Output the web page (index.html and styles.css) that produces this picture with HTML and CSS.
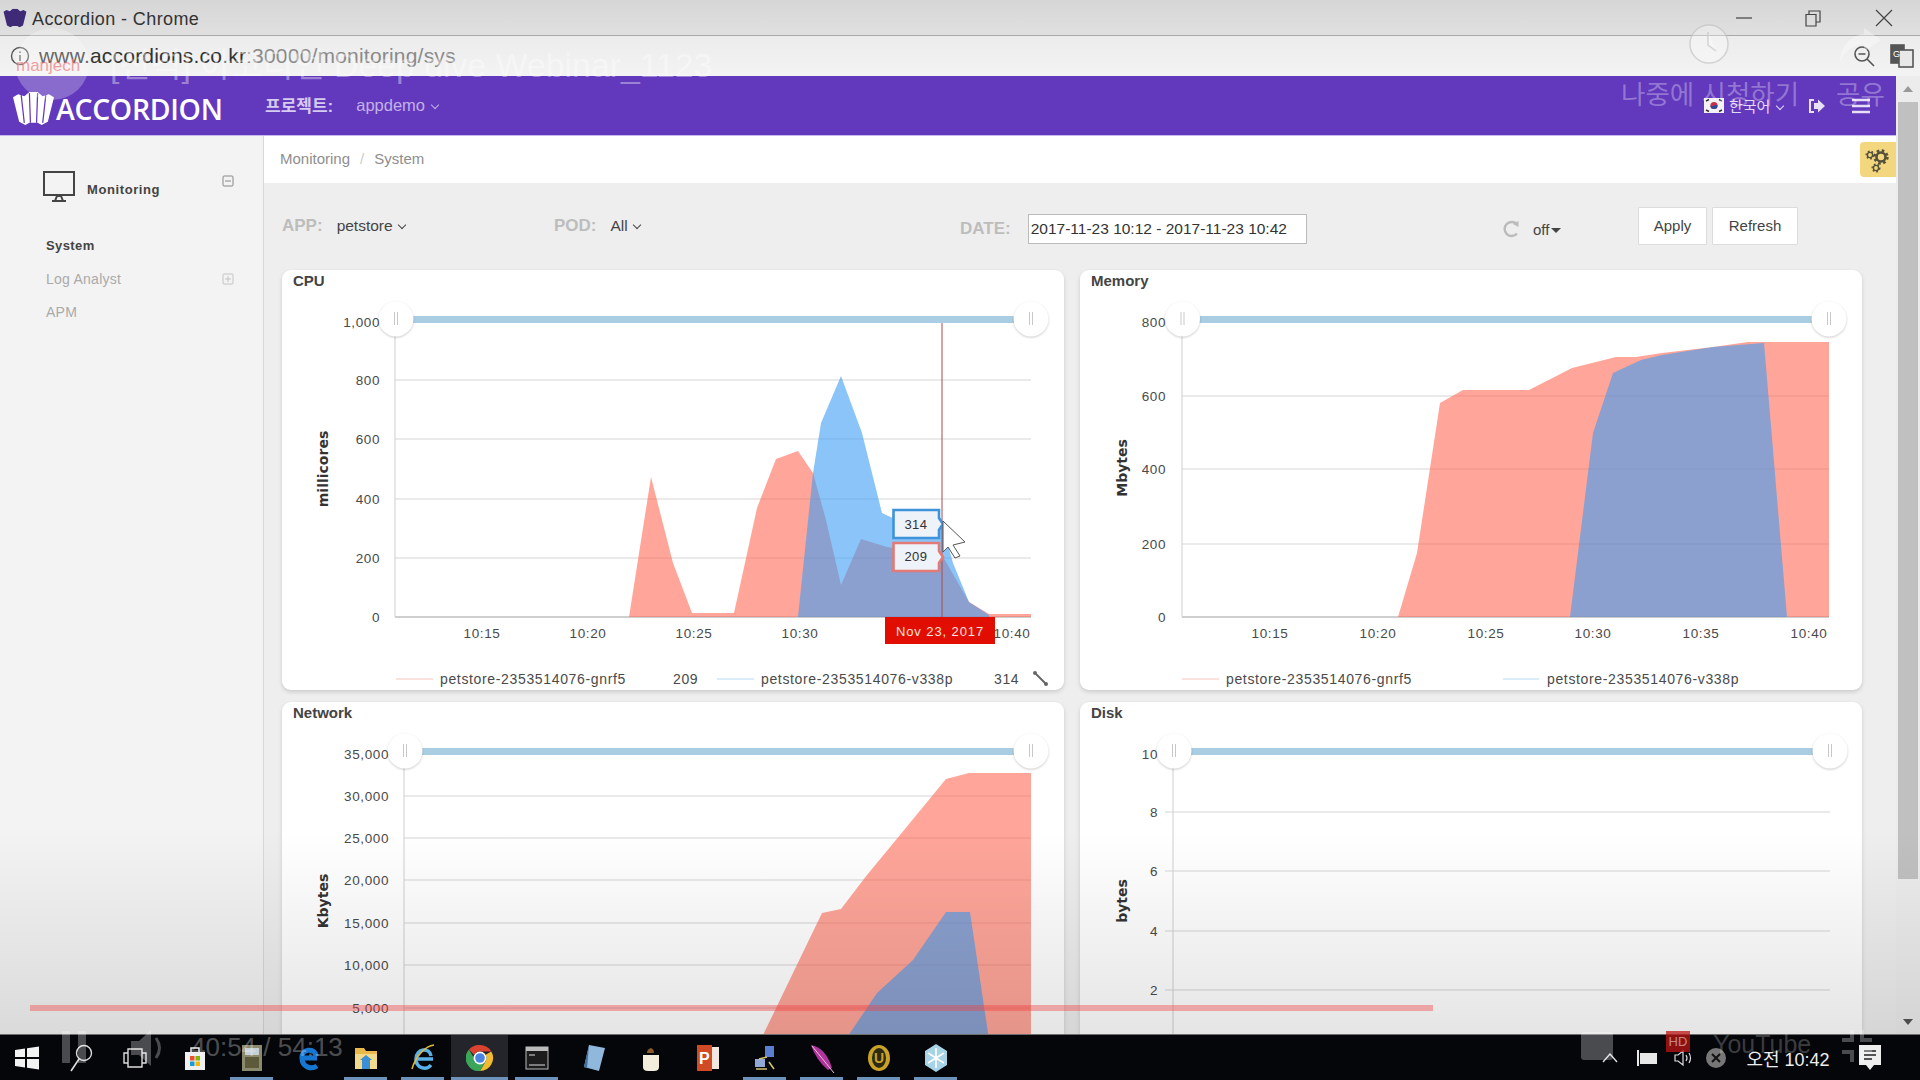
FILE: index.html
```html
<!DOCTYPE html>
<html lang="ko">

<head>
    <meta charset="UTF-8">
    <title>Accordion - Chrome</title>
    <link rel="stylesheet" href="styles.css">
</head>

<body>
    <svg class="svg-defs" width="0" height="0">
        <defs>
            <symbol id="accordion" viewBox="0 0 42 32">
                <path d="M1 5 L6 2 L12 4 L17 0 L25 0 L30 4 L36 2 L41 5 L35 29 L29 32 L25 30 L17 30 L13 32 L7 29 Z" />
            </symbol>
            <g id="handle">
                <circle class="handle-disc" r="17.5" />
                <path class="handle-grip" d="M-1.5 -7 V6 M1.5 -7 V6" />
            </g>
        </defs>
    </svg>

    <div class="titlebar">
        <svg class="favicon" viewBox="0 0 42 32"><use href="#accordion" /></svg>
        <span class="window-title">Accordion - Chrome</span>
        <div class="window-controls">
            <svg width="20" height="20" viewBox="0 0 20 20"><path d="M2 10 H18" /></svg>
            <svg width="20" height="20" viewBox="0 0 20 20"><path d="M3 6.5 H13 V18 H3 Z M6 6 V3 H17 V14 H13.5" /></svg>
            <svg width="20" height="20" viewBox="0 0 20 20"><path d="M2 2 L18 18 M18 2 L2 18" /></svg>
        </div>
    </div>

    <div class="addressbar">
        <svg class="info-icon" width="20" height="20" viewBox="0 0 20 20">
            <circle cx="10" cy="10" r="8.5" />
            <path d="M10 9 V15 M10 5.5 V7" />
        </svg>
        <span class="url"><b>www.accordions.co.kr</b>:30000/monitoring/sys</span>
        <div class="address-tools">
            <svg width="24" height="24" viewBox="0 0 24 24">
                <circle cx="10" cy="10" r="7" />
                <path d="M6.5 10 H13.5 M15 15 L22 22" />
            </svg>
            <svg class="translate-icon" width="24" height="24" viewBox="0 0 24 24">
                <rect x="1" y="1" width="13" height="18" fill="#555" />
                <rect x="9" y="6" width="14" height="17" fill="#e8e8e8" stroke="#555" />
                <text x="3" y="13" class="translate-g">G</text>
            </svg>
        </div>
    </div>

    <div class="app">
        <div class="app-content">
            <header class="topnav">
                <a class="brand">
                    <svg class="brand-mark" viewBox="0 0 42 32">
                        <use href="#accordion" />
                        <path d="M9 3 L12 30 M17 1 L18 30 M25 1 L24 30 M33 3 L30 30" />
                    </svg>
                    <span class="brand-name">ACCORDION</span>
                </a>
                <span class="project-label">프로젝트:</span>
                <span class="project-value">appdemo <i class="caret"></i></span>
                <div class="nav-right">
                    <svg class="flag" width="20" height="15" viewBox="0 0 20 15">
                        <rect width="20" height="15" fill="#f4f1f4" />
                        <circle cx="10" cy="7.5" r="3.6" fill="#c8304a" />
                        <path d="M6.4 7.5 A3.6 3.6 0 0 0 13.6 7.5 Q12 6.5 10 7.5 T6.4 7.5 Z" fill="#2a4a9a" />
                        <path d="M2 3 L5 1.5 M15 1.5 L18 3 M2 12 L5 13.5 M15 13.5 L18 12" stroke="#333" stroke-width="1.4" />
                    </svg>
                    <span class="lang">한국어 <i class="caret"></i></span>
                    <svg class="exit-icon" width="18" height="16" viewBox="0 0 18 16">
                        <path class="exit-door" d="M6 2 H2 V14 H6" />
                        <path class="exit-arrow" d="M6 5 H10 V1.5 L17 8 L10 14.5 V11 H6 Z" />
                    </svg>
                    <svg class="menu-icon" width="18" height="16" viewBox="0 0 18 16">
                        <path d="M0 2 H18 M0 8 H18 M0 14 H18" />
                    </svg>
                </div>
            </header>

            <div class="page">
                <aside class="sidebar">
                    <div class="side-group">
                        <svg class="monitor-icon" width="32" height="31" viewBox="0 0 32 31">
                            <path class="monitor-screen" d="M1 1 H31 V24 H1 Z" />
                            <path class="monitor-stand" d="M12 30 H20 L18 25 H14 Z M9 30 H23" />
                        </svg>
                        <span class="side-heading">Monitoring</span>
                        <svg class="tree-box" width="12" height="12" viewBox="0 0 12 12">
                            <rect x="1" y="1" width="10" height="10" rx="1" />
                            <path d="M3 6 H9" />
                        </svg>
                    </div>
                    <ul class="side-menu">
                        <li class="active">System</li>
                        <li>Log Analyst
                            <svg class="tree-box light" width="12" height="12" viewBox="0 0 12 12">
                                <rect x="1" y="1" width="10" height="10" rx="1" />
                                <path d="M3 6 H9 M6 3 V9" />
                            </svg>
                        </li>
                        <li>APM</li>
                    </ul>
                </aside>

                <main class="content">
                    <div class="breadcrumb">
                        <span>Monitoring</span>
                        <span class="sep">/</span>
                        <span>System</span>
                        <div class="settings-tab">
                            <svg width="26" height="28" viewBox="0 0 26 28">
                                <circle class="gear-hub" cx="16" cy="11" r="4.5" />
                                <circle class="gear-teeth" cx="16" cy="11" r="6.5" />
                                <circle class="gear-hub small" cx="5" cy="9" r="2.6" />
                                <circle class="gear-teeth small" cx="5" cy="9" r="3.8" />
                                <circle class="gear-hub small" cx="11" cy="22" r="2.6" />
                                <circle class="gear-teeth small" cx="11" cy="22" r="3.8" />
                            </svg>
                        </div>
                    </div>

                    <form class="filters">
                        <div class="filter filter-app">
                            <label>APP:</label>
                            <span class="filter-value">petstore <i class="caret"></i></span>
                        </div>
                        <div class="filter filter-pod">
                            <label>POD:</label>
                            <span class="filter-value">All <i class="caret"></i></span>
                        </div>
                        <div class="filter filter-date">
                            <label>DATE:</label>
                            <input class="date-input" type="text" value="2017-11-23 10:12 - 2017-11-23 10:42">
                        </div>
                        <div class="filter filter-auto">
                            <svg class="reload-icon" width="18" height="18" viewBox="0 0 18 18">
                                <path d="M15 4.5 A7 7 0 1 0 15 13.5" />
                                <path class="reload-tip" d="M11 4 L16.5 1 V7 Z" />
                            </svg>
                            <span class="auto-value">off<i class="caret-solid"></i></span>
                        </div>
                        <button class="btn" type="button">Apply</button>
                        <button class="btn btn-wide" type="button">Refresh</button>
                    </form>

                    <div class="panels">
                        <section class="panel">
                            <h3 class="panel-title">CPU</h3>
                            <svg class="chart" viewBox="282 290 782 400">
                                <path class="grid" d="M395 380 H1031 M395 439 H1031 M395 499 H1031 M395 558 H1031" />
                                <path class="axis" d="M395 321 V617" />
                                <path class="axis-zero" d="M395 617 H1031" />
                                <path class="area-red" d="M629 617 L651 477 L673 563 L692 613 L734 613 L757 508 L776 459 L798 451 L813 473 L826 520 L841 585 L861 539 L887 547 L942 555 L969 602 L989 614 L1031 614 V617 Z" />
                                <path class="area-blue" d="M798 617 L813 473 L821 423 L841 376 L862 433 L882 513 L897 520 L942 524 L953 563 L969 602 L989 615 V617 Z" />
                                <path class="crosshair" d="M942 321 V617" />
                                <rect class="slider-bar" x="410" y="316" width="606" height="7" />
                                <use href="#handle" x="396" y="319" />
                                <use href="#handle" x="1031" y="319" />
                                <text class="tick" x="380" y="327">1,000</text>
                                <text class="tick" x="380" y="385">800</text>
                                <text class="tick" x="380" y="444">600</text>
                                <text class="tick" x="380" y="504">400</text>
                                <text class="tick" x="380" y="563">200</text>
                                <text class="tick" x="380" y="622">0</text>
                                <text class="axis-title" transform="translate(328 469) rotate(-90)">millicores</text>
                                <text class="tick mid" x="482" y="638">10:15</text>
                                <text class="tick mid" x="588" y="638">10:20</text>
                                <text class="tick mid" x="694" y="638">10:25</text>
                                <text class="tick mid" x="800" y="638">10:30</text>
                                <text class="tick mid" x="1012" y="638">10:40</text>
                                <path class="tip tip-blue" d="M893.5 510 H939 V518 L943 524 L939 530 V538 H893.5 Z" />
                                <path class="tip tip-red" d="M893.5 543 H939 V551 L943 557 L939 563 V571 H893.5 Z" />
                                <text class="tip-text" x="916" y="529">314</text>
                                <text class="tip-text" x="916" y="561">209</text>
                                <rect class="date-flag" x="885" y="617" width="110" height="27" />
                                <text class="date-flag-text" x="940" y="636">Nov 23, 2017</text>
                                <path class="cursor" d="M943 521 L965 542 L953 545 L960 556 L955 558 L948 547 L943 552 Z" />
                                <path class="legend-line red" d="M396 679 H433" />
                                <text class="legend" x="440" y="684">petstore-2353514076-gnrf5</text>
                                <text class="legend" x="673" y="684">209</text>
                                <path class="legend-line blue" d="M717 679 H754" />
                                <text class="legend" x="761" y="684">petstore-2353514076-v338p</text>
                                <text class="legend" x="994" y="684">314</text>
                                <path class="wrench" d="M1036 674 L1046 684" />
                                <circle class="wrench-head" cx="1035" cy="673" r="2" />
                                <circle class="wrench-head" cx="1046" cy="684" r="2" />
                            </svg>
                        </section>

                        <section class="panel">
                            <h3 class="panel-title">Memory</h3>
                            <svg class="chart" viewBox="1080 290 782 400">
                                <path class="grid" d="M1182 396 H1829 M1182 469 H1829 M1182 544 H1829" />
                                <path class="axis" d="M1182 323 V617" />
                                <path class="axis-zero" d="M1182 617 H1829" />
                                <path class="area-red" d="M1398 617 L1417 553 L1440 403 L1463 390 L1529 390 L1572 368 L1616 357 L1636 357 L1662 353 L1713 347 L1748 342 L1829 342 V617 Z" />
                                <path class="area-blue" d="M1570 617 L1593 433 L1613 373 L1641 360 L1662 355 L1713 347 L1764 343 L1787 617 Z" />
                                <rect class="slider-bar" x="1196" y="316" width="620" height="7" />
                                <use href="#handle" x="1182.5" y="319" />
                                <use href="#handle" x="1829" y="319" />
                                <text class="tick" x="1166" y="327">800</text>
                                <text class="tick" x="1166" y="401">600</text>
                                <text class="tick" x="1166" y="474">400</text>
                                <text class="tick" x="1166" y="549">200</text>
                                <text class="tick" x="1166" y="622">0</text>
                                <text class="axis-title" transform="translate(1127 468) rotate(-90)">Mbytes</text>
                                <text class="tick mid" x="1270" y="638">10:15</text>
                                <text class="tick mid" x="1378" y="638">10:20</text>
                                <text class="tick mid" x="1486" y="638">10:25</text>
                                <text class="tick mid" x="1593" y="638">10:30</text>
                                <text class="tick mid" x="1701" y="638">10:35</text>
                                <text class="tick mid" x="1809" y="638">10:40</text>
                                <path class="legend-line red" d="M1182 679 H1219" />
                                <text class="legend" x="1226" y="684">petstore-2353514076-gnrf5</text>
                                <path class="legend-line blue" d="M1503 679 H1539" />
                                <text class="legend" x="1547" y="684">petstore-2353514076-v338p</text>
                            </svg>
                        </section>

                        <section class="panel">
                            <h3 class="panel-title">Network</h3>
                            <svg class="chart" viewBox="282 722 782 400">
                                <path class="grid" d="M404 796 H1031 M404 838 H1031 M404 880 H1031 M404 923 H1031 M404 965 H1031 M404 1008 H1031" />
                                <path class="axis" d="M404 756 V1100" />
                                <path class="area-red" d="M754 1050 L764 1033 L822 913 L841 909 L867 875 L900 835 L946 779 L969 773 L1031 773 V1050 Z" />
                                <path class="area-blue" d="M840 1050 L850 1033 L877 993 L913 960 L946 912 L970 912 L988 1033 L991 1050 Z" />
                                <rect class="slider-bar" x="420" y="748" width="596" height="7" />
                                <use href="#handle" x="405" y="751" />
                                <use href="#handle" x="1031" y="751" />
                                <text class="tick" x="389" y="759">35,000</text>
                                <text class="tick" x="389" y="801">30,000</text>
                                <text class="tick" x="389" y="843">25,000</text>
                                <text class="tick" x="389" y="885">20,000</text>
                                <text class="tick" x="389" y="928">15,000</text>
                                <text class="tick" x="389" y="970">10,000</text>
                                <text class="tick" x="389" y="1013">5,000</text>
                                <text class="axis-title" transform="translate(328 901) rotate(-90)">Kbytes</text>
                            </svg>
                        </section>

                        <section class="panel">
                            <h3 class="panel-title">Disk</h3>
                            <svg class="chart" viewBox="1080 722 782 400">
                                <path class="grid" d="M1165 812 H1830 M1165 871 H1830 M1165 931 H1830 M1165 990 H1830" />
                                <path class="axis" d="M1173 756 V1100" />
                                <rect class="slider-bar" x="1190" y="748" width="625" height="7" />
                                <use href="#handle" x="1174" y="751" />
                                <use href="#handle" x="1830" y="751" />
                                <text class="tick" x="1158" y="759">10</text>
                                <text class="tick" x="1158" y="817">8</text>
                                <text class="tick" x="1158" y="876">6</text>
                                <text class="tick" x="1158" y="936">4</text>
                                <text class="tick" x="1158" y="995">2</text>
                                <text class="axis-title" transform="translate(1127 901) rotate(-90)">bytes</text>
                            </svg>
                        </section>
                    </div>
                </main>
            </div>
        </div>

        <div class="scrollbar">
            <i class="arrow-up"></i>
            <div class="scroll-thumb"></div>
            <i class="arrow-down"></i>
        </div>
    </div>

    <footer class="taskbar">
        <div class="task-tile narrow">
            <svg width="24" height="24" viewBox="0 0 24 24"><path fill="#f2f2f2" d="M0 4 L10 2.5 V11 H0 Z M12 2.2 L24 0.5 V11 H12 Z M0 13 H10 V21.5 L0 20 Z M12 13 H24 V23.5 L12 21.8 Z" /></svg>
        </div>
        <div class="task-tile narrow">
            <svg width="24" height="28" viewBox="0 0 24 28"><circle cx="15" cy="9" r="7.5" fill="none" stroke="#ddd" stroke-width="1.4" /><path d="M10 15 L2 27" stroke="#ddd" stroke-width="1.6" /></svg>
        </div>
        <div class="task-tile narrow spaced">
            <svg width="26" height="26" viewBox="0 0 26 26"><path d="M6 4 H20 V22 H6 Z M6 8 H2 V18 H6 M20 8 H24 V18 H20" fill="none" stroke="#ddd" stroke-width="1.4" /></svg>
        </div>
        <div class="task-tile">
            <svg width="26" height="28" viewBox="0 0 26 28"><path fill="#f0f0f0" d="M3 8 H23 V26 H3 Z" /><path d="M9 8 V4 H17 V8" fill="none" stroke="#f0f0f0" stroke-width="1.5" /><rect x="8" y="12" width="4.5" height="4.5" fill="#e8512a" /><rect x="13.5" y="12" width="4.5" height="4.5" fill="#7fba00" /><rect x="8" y="17.5" width="4.5" height="4.5" fill="#1b9ad6" /><rect x="13.5" y="17.5" width="4.5" height="4.5" fill="#f5b800" /></svg>
        </div>
        <div class="task-tile running">
            <svg width="24" height="30" viewBox="0 0 24 30"><rect x="2" y="2" width="20" height="26" fill="#8c8a6e" /><rect x="5" y="14" width="14" height="11" fill="#5c5a3a" /><rect x="5" y="5" width="14" height="7" fill="#c5cfd6" /></svg>
        </div>
        <div class="task-tile">
            <svg width="24" height="28" viewBox="0 0 24 28"><path fill="none" stroke="#1677d2" stroke-width="5" d="M20 14 H5 C4 5 18 3 19 12 M5 14 C5 23 14 26 20 22" /></svg>
        </div>
        <div class="task-tile running">
            <svg width="26" height="26" viewBox="0 0 26 26"><path fill="#e9b94a" d="M2 3 H11 L13 6 H24 V24 H2 Z" /><path fill="#f3d98a" d="M2 9 H24 V24 H2 Z" /><rect x="9" y="15" width="8" height="9" fill="#3b8fd6" /><path fill="#3b8fd6" d="M7 15 L13 10 L19 15 Z" /></svg>
        </div>
        <div class="task-tile running">
            <svg width="26" height="30" viewBox="0 0 26 30"><path fill="none" stroke="#58b2e8" stroke-width="3.5" d="M23 16 H6 C6 5 20 4 21 13 M6 16 C6 25 16 28 21 22" /><path fill="none" stroke="#e2b93d" stroke-width="1.5" d="M2 26 C6 12 16 3 24 2" /></svg>
        </div>
        <div class="task-tile running active">
            <svg width="28" height="28" viewBox="0 0 28 28">
                <path fill="#d9432f" d="M14 1 A13 13 0 0 1 25.3 7.5 H14 A6.5 6.5 0 0 0 8 11 L3 5.5 A13 13 0 0 1 14 1 Z" />
                <path fill="#f2bb2f" d="M25.3 7.5 A13 13 0 0 1 14 27 L19.6 17.2 A6.5 6.5 0 0 0 19.6 10.8 Z" />
                <path fill="#3ba55a" d="M3 5.5 A13 13 0 0 0 14 27 L19.6 17.2 A6.5 6.5 0 0 1 8 14 Z" />
                <circle cx="14" cy="14" r="6.5" fill="#fff" />
                <circle cx="14" cy="14" r="4.8" fill="#4a84e0" />
            </svg>
        </div>
        <div class="task-tile running">
            <svg width="24" height="26" viewBox="0 0 24 26"><rect x="1" y="2" width="22" height="22" fill="#1c1c1c" stroke="#bbb" /><rect x="1" y="2" width="22" height="4" fill="#bbb" /><path d="M4 10 H10 M4 20 H20" stroke="#ddd" /></svg>
        </div>
        <div class="task-tile">
            <svg width="24" height="30" viewBox="0 0 24 30"><path fill="#8fb8dc" d="M7 2 L23 5 L17 28 L2 24 Z" /><path fill="#3f6f9a" d="M7 2 L2 24 L5 25 Z" /></svg>
        </div>
        <div class="task-tile">
            <svg width="24" height="30" viewBox="0 0 24 30"><path fill="#f3eddb" d="M4 12 H20 V24 Q20 28 15 28 H9 Q4 28 4 24 Z" /><path fill="#8a5a2a" d="M8 10 Q8 6 12 5 Q15 6 15 10 Z" /></svg>
        </div>
        <div class="task-tile">
            <svg width="26" height="28" viewBox="0 0 26 28"><rect x="12" y="3" width="12" height="22" fill="#f2e6e0" /><rect x="2" y="1" width="15" height="26" fill="#d04a26" /><text class="ppt-letter" x="4" y="20">P</text></svg>
        </div>
        <div class="task-tile running">
            <svg width="24" height="28" viewBox="0 0 24 28"><rect x="12" y="2" width="9" height="11" fill="#5a7fd0" /><rect x="2" y="15" width="10" height="8" fill="#8fa8d8" /><path d="M14 13 L6 15 M3 25 H14 M16 18 L21 25" stroke="#d6c26e" stroke-width="1.6" /></svg>
        </div>
        <div class="task-tile running">
            <svg width="28" height="32" viewBox="0 0 28 32"><path fill="#b2339c" d="M3 3 Q18 6 24 26 L20 28 Q8 18 3 3 Z" /><path d="M4 4 L26 31" stroke="#e6c3df" /></svg>
        </div>
        <div class="task-tile running">
            <svg width="24" height="28" viewBox="0 0 24 28"><ellipse cx="12" cy="14" rx="11" ry="13" fill="#c9a227" /><ellipse cx="12" cy="14" rx="7" ry="10" fill="#2d2a12" /><text class="ue-letter" x="7" y="19">U</text></svg>
        </div>
        <div class="task-tile running">
            <svg width="24" height="30" viewBox="0 0 24 30"><path fill="#a7d3e6" d="M12 1 L23 8 V22 L12 29 L1 22 V8 Z" /><path d="M12 5 V25 M4 10 L20 20 M20 10 L4 20" stroke="#fff" stroke-width="1.6" /></svg>
        </div>

        <div class="tray">
            <div class="tray-item chevron"><svg width="16" height="10" viewBox="0 0 16 10"><path d="M1 9 L8 1 L15 9" /></svg></div>
            <div class="tray-item battery"><svg width="22" height="18" viewBox="0 0 22 18"><rect x="3" y="4" width="17" height="11" fill="#e8e8e8" /><path d="M1 1 V17" stroke="#e8e8e8" stroke-width="2" /></svg></div>
            <div class="tray-item speaker"><svg width="20" height="18" viewBox="0 0 20 18"><path d="M1 6 H4 L9 2 V16 L4 12 H1 Z M12 6 Q14 9 12 12 M15 4 Q18 9 15 14" /></svg></div>
            <div class="tray-item network"><svg width="22" height="22" viewBox="0 0 22 22"><circle cx="11" cy="11" r="10" fill="#777" /><path d="M7 7 L15 15 M15 7 L7 15" stroke="#111" stroke-width="2" /></svg></div>
            <div class="tray-item clock">오전 10:42</div>
            <div class="tray-item notify"><svg width="24" height="28" viewBox="0 0 24 28"><path fill="#eee" d="M1 1 H23 V21 H16 L12 26 L8 21 H1 Z" /><path d="M6 7 H18 M6 11 H18 M6 15 H14" stroke="#222" stroke-width="1.5" /></svg></div>
        </div>
    </footer>

    <!-- video player chrome that sits on top of the recording -->
    <div class="player">
        <div class="player-fade"></div>
        <div class="channel-badge"></div>
        <span class="channel-name">manjech</span>
        <div class="video-title">[전격] 아코디언 Deep dive Webinar_1123</div>
        <svg class="later-icon" width="42" height="42" viewBox="0 0 42 42"><circle cx="21" cy="21" r="19" /><path d="M20 9 V22 L28 28" /></svg>
        <svg class="share-icon" width="44" height="36" viewBox="0 0 44 36"><path d="M26 1 L43 13 L26 25 V18 C14 18 7 24 2 35 C3 20 12 8 26 7 Z" /></svg>
        <span class="later-text">나중에 시청하기</span>
        <span class="share-text">공유</span>
        <div class="progress"></div>
        <svg class="pause-icon" width="26" height="32" viewBox="0 0 26 32"><rect x="0" width="8" height="32" /><rect x="16" width="8" height="32" /></svg>
        <svg class="volume-icon" width="36" height="40" viewBox="0 0 36 40"><path d="M0 13 H8 L20 2 V38 L8 27 H0 Z" /><path class="wave" d="M25 10 Q32 20 25 30" /></svg>
        <span class="time-text">40:54 / 54:13</span>
        <svg class="cc-icon" width="32" height="28" viewBox="0 0 32 28"><rect width="32" height="28" rx="3" /></svg>
        <span class="hd-badge">HD</span>
        <span class="yt-text">YouTube</span>
        <svg class="full-icon" width="30" height="32" viewBox="0 0 30 32"><path d="M10 0 V10 H0 M20 0 V10 H30 M10 32 V22 H0 M20 32 V22 H30" /></svg>
    </div>
</body>

</html>
```

FILE: styles.css
```css
* {
    box-sizing: border-box;
}

html,
body {
    margin: 0;
    padding: 0;
}

body {
    position: relative;
    display: flex;
    flex-direction: column;
    width: 1920px;
    height: 1080px;
    overflow: hidden;
    font-family: "Liberation Sans", "Noto Sans CJK KR", sans-serif;
    color: #444;
    background: #eee;
}

.svg-defs {
    position: absolute;
}

/* browser window */
.titlebar {
    display: flex;
    align-items: center;
    flex: 0 0 36px;
    padding: 3px 0 0 3px;
    background: linear-gradient(#d6d6d6, #e0e0e0);
    border-bottom: 1px solid #a9a9a9;
}

.favicon {
    width: 24px;
    height: 20px;
    margin-top: -3px;
    fill: #3f2a78;
}

.window-title {
    margin-left: 5px;
    font-size: 18px;
    letter-spacing: .4px;
    color: #333;
}

.window-controls {
    display: flex;
    gap: 49px;
    margin: -3px 0 0 auto;
    padding-right: 26px;
}

.window-controls svg {
    fill: none;
    stroke: #444;
    stroke-width: 1.2;
}

.window-controls svg:last-child {
    margin-left: 2px;
}

.addressbar {
    display: flex;
    align-items: center;
    flex: 0 0 40px;
    padding: 0 6px 0 10px;
    background: linear-gradient(#ececec, #f3f3f3);
}

.info-icon {
    fill: none;
    stroke: #555;
    stroke-width: 1.4;
}

.url {
    margin-left: 9px;
    font-size: 21px;
    letter-spacing: .2px;
    color: #8a8a8a;
}

.url b {
    font-weight: normal;
    color: #333;
}

.address-tools {
    display: flex;
    gap: 14px;
    margin-left: auto;
}

.address-tools svg {
    fill: none;
    stroke: #555;
    stroke-width: 1.6;
}

.translate-g {
    font-size: 9px;
    fill: #fff;
    stroke: none;
}

.app {
    display: flex;
    flex: 1;
    min-height: 0;
}

.app-content {
    display: flex;
    flex-direction: column;
    width: 1896px;
}

/* top navigation */
.topnav {
    display: flex;
    align-items: center;
    flex: 0 0 60px;
    padding-left: 12px;
    color: #fff;
    background: #6238bd;
    border-bottom: 1px solid #c9b6ee;
}

.brand {
    display: flex;
    align-items: center;
    margin-top: 6px;
    width: 253px;
}

.brand-mark {
    width: 43px;
    height: 33px;
    fill: #fff;
}

.brand-mark path {
    fill: none;
    stroke: #6238bd;
    stroke-width: 1.2;
}

.brand-name {
    margin-left: 1px;
    font-family: "Open Sans", sans-serif;
    font-size: 28.4px;
    font-weight: 600;
    letter-spacing: -.3px;
}

.project-label {
    margin-top: -2px;
    font-size: 17px;
    font-weight: bold;
    color: #d6cbf0;
}

.project-value {
    margin-left: 23px;
    font-size: 16.5px;
    color: #c2b2ea;
}

.caret {
    display: inline-block;
    width: 6px;
    height: 6px;
    margin: 0 0 3px 2px;
    border-right: 1px solid currentColor;
    border-bottom: 1px solid currentColor;
    transform: rotate(45deg);
}

.caret-solid {
    display: inline-block;
    margin-left: 2px;
    vertical-align: middle;
    border-top: 5px solid #444;
    border-right: 5px solid transparent;
    border-left: 5px solid transparent;
}

.nav-right {
    display: flex;
    align-items: center;
    margin-left: auto;
    padding-right: 26px;
}

.lang {
    width: 77px;
    margin-left: 5px;
    font-size: 15px;
    color: #e2daf5;
}

.exit-icon {
    margin-left: 2px;
}

.exit-door {
    fill: none;
    stroke: #e6dff5;
    stroke-width: 2;
}

.exit-arrow {
    fill: #e6dff5;
}

.menu-icon {
    margin-left: 26px;
    fill: none;
    stroke: #e6dff5;
    stroke-width: 2.6;
}

/* sidebar */
.page {
    display: flex;
    flex: 1;
    min-height: 0;
    overflow: hidden;
}

.sidebar {
    flex: 0 0 264px;
    padding: 35px 29px 0 43px;
    background: #f3f3f3;
    border-right: 1px solid #d8d8d8;
}

.side-group {
    display: flex;
    align-items: flex-start;
}

.monitor-screen,
.monitor-stand {
    fill: none;
    stroke: #444;
    stroke-width: 2;
}

.side-heading {
    margin: 11px 0 0 12px;
    font-size: 13px;
    font-weight: bold;
    letter-spacing: .6px;
    color: #444;
}

.tree-box {
    margin: 4px 0 0 auto;
    fill: none;
    stroke: #888;
}

.tree-box.light {
    margin: 0;
    stroke: #c4c4c4;
}

.side-menu {
    margin: 27px 0 0 3px;
    padding: 0;
    list-style: none;
    font-size: 14px;
    color: #aaa;
}

.side-menu li {
    display: flex;
    align-items: center;
    justify-content: space-between;
    height: 33px;
    letter-spacing: .25px;
}

.side-menu .active {
    font-size: 13px;
    font-weight: bold;
    letter-spacing: .4px;
    color: #444;
}

/* main column */
.content {
    flex: 1;
    min-width: 0;
    padding: 0 0 0 18px;
}

.breadcrumb {
    display: flex;
    align-items: center;
    gap: 10px;
    height: 47px;
    margin-left: -18px;
    padding: 0 0 2px 16px;
    font-size: 15px;
    color: #8e8e8e;
    background: #fff;
}

.sep {
    color: #ccc;
}

.settings-tab {
    display: flex;
    align-items: center;
    justify-content: center;
    width: 36px;
    height: 35px;
    margin: 2px 0 0 auto;
    background: #f3d77e;
    border-radius: 4px 0 0 4px;
}

.gear-hub {
    fill: none;
    stroke: #55503a;
    stroke-width: 2.6;
}

.gear-hub.small {
    stroke-width: 1.4;
}

.gear-teeth {
    fill: none;
    stroke: #55503a;
    stroke-width: 2.4;
    stroke-dasharray: 2.6 2.5;
}

.gear-teeth.small {
    stroke-width: 1.4;
    stroke-dasharray: 1.8 2;
}

.filters {
    display: flex;
    align-items: center;
    height: 87px;
    padding-bottom: 2px;
}

.filter {
    display: flex;
    align-items: center;
}

.filter label {
    font-size: 17px;
    font-weight: bold;
    color: #bdbdbd;
}

.filter-value {
    margin-left: 14px;
    font-size: 15.5px;
    color: #444;
}

.filter-app {
    width: 272px;
}

.filter-pod {
    width: 406px;
}

.filter-date {
    width: 542px;
    margin-top: 7px;
}

.date-input {
    width: 279px;
    height: 30px;
    margin-left: 17px;
    padding: 0 2px;
    font-family: inherit;
    font-size: 15.5px;
    color: #333;
    background: #fff;
    border: 1px solid #bbb;
    border-radius: 0;
}

.filter-auto {
    gap: 13px;
    width: 136px;
    margin-top: 7px;
}

.reload-icon {
    fill: none;
    stroke: #bbb;
    stroke-width: 2.4;
}

.reload-tip {
    fill: #bbb;
    stroke: none;
}

.auto-value {
    font-size: 15px;
}

.btn {
    width: 69px;
    height: 38px;
    margin-right: 5px;
    font-family: inherit;
    font-size: 15px;
    color: #444;
    background: #fff;
    border: 1px solid #dcdcdc;
    border-radius: 1px;
}

.btn-wide {
    width: 86px;
}

/* chart panels */
.panels {
    display: grid;
    grid-template-columns: 782px 782px;
    grid-auto-rows: 420px;
    column-gap: 16px;
    row-gap: 12px;
}

.panel {
    background: #fff;
    border-radius: 9px;
    box-shadow: 0 2px 4px rgba(0, 0, 0, .15);
    overflow: hidden;
}

.panel-title {
    height: 20px;
    margin: 0;
    padding: 2px 0 0 11px;
    font-size: 15px;
    font-weight: bold;
    color: #444;
}

.chart {
    display: block;
    width: 782px;
    height: 400px;
}

.grid {
    fill: none;
    stroke: #e4e4e4;
    stroke-width: 1.5;
}

.axis {
    fill: none;
    stroke: #cfcfcf;
}

.axis-zero {
    fill: none;
    stroke: #cfcfcf;
    stroke-width: 2;
}

.area-red {
    fill: rgba(255, 100, 80, .58);
}

.area-blue {
    fill: rgba(62, 157, 243, .6);
}

.crosshair {
    fill: none;
    stroke: #a84a48;
}

.slider-bar {
    fill: #a9cde2;
}

.handle-disc {
    fill: #fff;
    filter: drop-shadow(0 1px 1px rgba(0, 0, 0, .2));
}

.handle-grip {
    fill: none;
    stroke: #c8c8c8;
}

.tick {
    font-size: 13.5px;
    letter-spacing: .6px;
    text-anchor: end;
    fill: #4a4a4a;
}

.tick.mid {
    text-anchor: middle;
}

.axis-title {
    font-family: "DejaVu Sans", sans-serif;
    font-size: 14px;
    font-weight: bold;
    text-anchor: middle;
    fill: #333;
}

.tip {
    fill: #eef2f9;
    stroke-width: 2.6;
}

.tip-blue {
    stroke: #3f93da;
}

.tip-red {
    stroke: #e27a75;
}

.tip-text {
    font-size: 13px;
    letter-spacing: .5px;
    text-anchor: middle;
    fill: #333;
}

.date-flag {
    fill: #e10e00;
}

.date-flag-text {
    font-size: 13px;
    letter-spacing: .9px;
    text-anchor: middle;
    fill: #fbe3df;
}

.cursor {
    fill: #fff;
    stroke: #555;
}

.legend {
    font-size: 14px;
    letter-spacing: .65px;
    fill: #4a4a4a;
}

.legend-line {
    fill: none;
}

.legend-line.red {
    stroke: #f7c4bd;
}

.legend-line.blue {
    stroke: #b6daf6;
}

.wrench {
    fill: none;
    stroke: #666;
    stroke-width: 2;
}

.wrench-head {
    fill: #666;
}

/* page scrollbar */
.scrollbar {
    display: flex;
    flex-direction: column;
    align-items: center;
    flex: 0 0 24px;
    padding-top: 10px;
    background: #ececec;
}

.arrow-up,
.arrow-down {
    border-right: 5px solid transparent;
    border-left: 5px solid transparent;
}

.arrow-up {
    border-bottom: 6px solid #999;
}

.arrow-down {
    margin-top: 140px;
    border-top: 6px solid #555;
}

.scroll-thumb {
    width: 20px;
    height: 777px;
    margin-top: 10px;
    background: #c0c0c0;
}

/* windows taskbar */
.taskbar {
    display: flex;
    flex: 0 0 46px;
    background: #05060a;
    border-top: 1px solid #6d6d6d;
}

.task-tile {
    position: relative;
    display: flex;
    align-items: center;
    justify-content: center;
    flex: 0 0 57px;
}

.task-tile.narrow {
    flex-basis: 54px;
}

.task-tile.spaced {
    margin-right: 4px;
}

.task-tile.active {
    background: #24252a;
}

.task-tile.running::after {
    content: "";
    position: absolute;
    right: 7px;
    bottom: 0;
    left: 7px;
    height: 3px;
    background: #6d93bd;
}

.task-tile.active::after {
    right: 0;
    left: 0;
}

.ppt-letter {
    font-size: 16px;
    font-weight: bold;
    fill: #fff;
}

.ue-letter {
    font-size: 14px;
    font-weight: bold;
    fill: #c9a227;
}

.tray {
    display: flex;
    align-items: center;
    margin-left: auto;
    padding-right: 25px;
    color: #eee;
}

.tray-item {
    display: flex;
    align-items: center;
    justify-content: center;
}

.chevron {
    width: 38px;
}

.chevron svg {
    fill: none;
    stroke: #ddd;
    stroke-width: 1.4;
}

.battery {
    width: 38px;
}

.speaker {
    width: 34px;
}

.speaker svg {
    fill: none;
    stroke: #ddd;
    stroke-width: 1.2;
}

.network {
    width: 30px;
}

.clock {
    width: 114px;
    font-size: 18px;
}

.notify {
    width: 50px;
}

/* video player overlay */
.player {
    position: absolute;
    inset: 0;
    pointer-events: none;
}

.player > * {
    position: absolute;
}

.player-fade {
    top: 830px;
    right: 0;
    left: 0;
    height: 204px;
    background: linear-gradient(rgba(0, 0, 0, 0), rgba(0, 0, 0, .1));
}

.channel-badge {
    top: 28px;
    left: 15px;
    width: 74px;
    height: 72px;
    background: rgba(255, 255, 255, .25);
    border-radius: 50%;
}

.channel-name {
    top: 56px;
    left: 16px;
    font-size: 17px;
    color: rgba(240, 130, 130, .75);
}

.video-title {
    top: 46px;
    left: 110px;
    font-size: 33.8px;
    line-height: 38px;
    white-space: nowrap;
    color: rgba(255, 255, 255, .38);
}

.later-icon {
    top: 23px;
    left: 1688px;
    fill: rgba(255, 255, 255, .3);
    stroke: rgba(190, 190, 190, .6);
    stroke-width: 1.5;
}

.share-icon {
    top: 27px;
    left: 1838px;
    fill: rgba(255, 255, 255, .35);
}

.later-text {
    top: 80px;
    left: 1621px;
    font-size: 26.5px;
    line-height: 30px;
    color: rgba(255, 255, 255, .32);
}

.share-text {
    top: 80px;
    left: 1836px;
    font-size: 26.5px;
    line-height: 30px;
    color: rgba(255, 255, 255, .32);
}

.progress {
    top: 1005px;
    left: 30px;
    width: 1403px;
    height: 6px;
    background: rgba(240, 70, 70, .42);
}

.pause-icon {
    top: 1031px;
    left: 62px;
    fill: rgba(255, 255, 255, .28);
}

.volume-icon {
    top: 1028px;
    left: 131px;
    fill: rgba(255, 255, 255, .28);
}

.volume-icon .wave {
    fill: none;
    stroke: rgba(255, 255, 255, .28);
    stroke-width: 3;
}

.time-text {
    top: 1032px;
    left: 191px;
    font-size: 26px;
    line-height: 30px;
    color: rgba(255, 255, 255, .3);
}

.cc-icon {
    top: 1032px;
    left: 1581px;
    fill: rgba(255, 255, 255, .28);
}

.hd-badge {
    top: 1031px;
    left: 1666px;
    width: 24px;
    height: 21px;
    font-size: 13px;
    line-height: 21px;
    text-align: center;
    color: rgba(255, 255, 255, .5);
    background: rgba(190, 20, 20, .75);
}

.yt-text {
    top: 1029px;
    left: 1713px;
    font-size: 25px;
    line-height: 30px;
    color: rgba(255, 255, 255, .22);
}

.full-icon {
    top: 1030px;
    left: 1842px;
    fill: none;
    stroke: rgba(255, 255, 255, .28);
    stroke-width: 4;
}
```
